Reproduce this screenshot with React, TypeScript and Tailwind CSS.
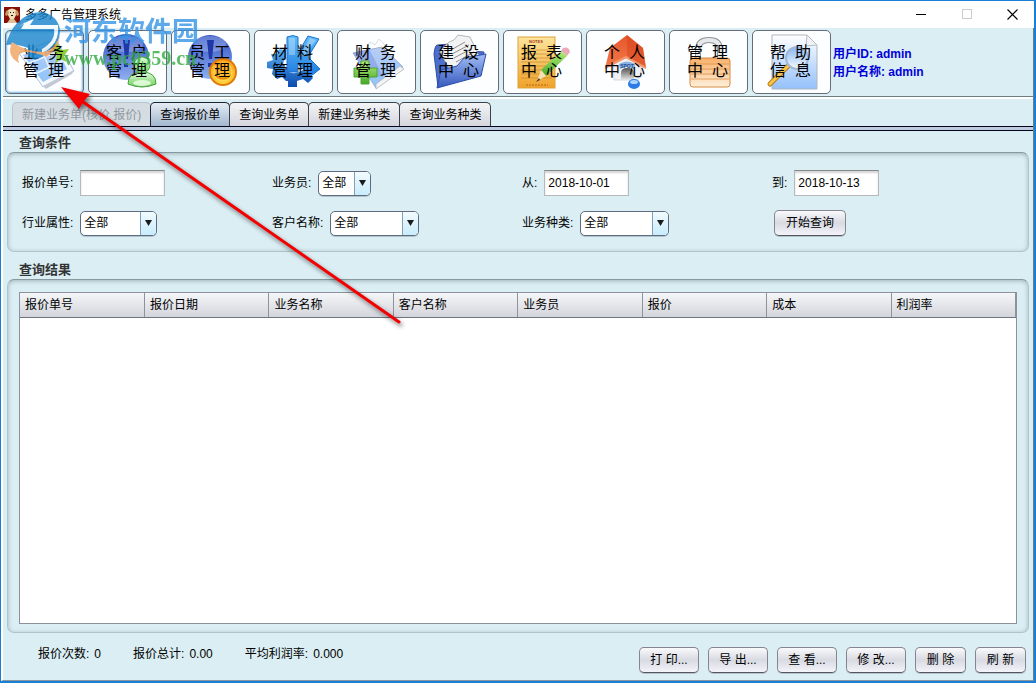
import type { ReactNode } from "react";
import clsx from "clsx";

/* ─── Data ─── */
const TABS = [
    { label: "新建业务单(核价 报价)", disabled: true },
    { label: "查询报价单", active: true },
    { label: "查询业务单" },
    { label: "新建业务种类" },
    { label: "查询业务种类" },
];

const COLUMNS = ["报价单号", "报价日期", "业务名称", "客户名称", "业务员", "报价", "成本", "利润率"];

const TOTALS = [
    { label: "报价次数", value: "0" },
    { label: "报价总计", value: "0.00" },
    { label: "平均利润率", value: "0.000" },
];

const ACTIONS = ["打 印...", "导 出...", "查 看...", "修 改...", "删 除", "刷 新"];

/* ─── Toolbar drawings, all on a 79x64 canvas ─── */
const PhotoIcon = (
    <>
        <path d="M13 22 L50 8 L68 40 L37 56 Z" fill="#f4f8ff" stroke="#b4c2da" />
        <path d="M17 24 L48 12 L61 38 L37 51 Z" fill="url(#photo)" />
        <path d="M21 33 L53 20 M29 43 L58 29 M35 17 L47 46" stroke="#e8f3ff" strokeWidth="1.5" />
        <path d="M46 14 Q52 8 55 19 L63 18 L58 25 L61 31 L54 28 L49 33 L51 24 Z" fill="#8ccc36" />
        <path d="M37 55 L68 39 L66 43 L40 58 Z" fill="#c3c9d4" />
    </>
);

const ClientIcon = (
    <>
        <circle cx="37" cy="26" r="23" fill="url(#ball)" />
        <ellipse cx="37" cy="13" rx="17" ry="8" fill="#fff" opacity=".25" />
        <path d="M34 9 H41 L39 28 H36 Z M35 32 h4 v4 h-4 Z" fill="#2038a8" />
        <circle cx="53" cy="34" r="8" fill="url(#green)" stroke="#58a94e" />
        <path d="M39 53 Q39 41 53 41 Q67 41 67 53 Q53 59 39 53 Z" fill="url(#green)" stroke="#46a13c" />
        <ellipse cx="53" cy="52" rx="9" ry="3" fill="#efffe8" opacity=".8" />
    </>
);

const StaffIcon = (
    <>
        <circle cx="38" cy="26" r="22" fill="url(#ball)" />
        <ellipse cx="38" cy="13" rx="16" ry="8" fill="#fff" opacity=".25" />
        <path d="M35 9 H42 L40 28 H37 Z M36 32 h4 v4 h-4 Z" fill="#2038a8" />
        <circle cx="51" cy="41" r="13" fill="url(#coin)" stroke="#e07a08" strokeWidth="2" />
        <path d="M43 44 Q51 51 59 44" fill="none" stroke="#e58a0c" strokeWidth="2" />
        <circle cx="51" cy="41" r="9" fill="none" stroke="#ffdc58" />
    </>
);

const MaterialIcon = (
    <>
        <path d="M31 19 L24 18 L22 23 L16 23 L18 29 L12 31 V37 L18 38 L17 43 L22 48 L27 46 L31 50 L33 50 V56 H42 V50 L48 48 L53 52 L58 47 L54 42 L48 39 Q38 46 30 38 Q26 32 31 27 Z" fill="url(#gear)" />
        <path d="M32 6 Q38 3 43 6 V22 L53 5 L64 8 L53 26 L65 38 L56 45 L43 33 V41 H32 Z" fill="url(#kblue)" stroke="#1c72d0" />
        <path d="M34 7 h6 v17 h-6 Z M55 7 L61 9 L50 24 L45 25 Z" fill="#fff" opacity=".3" />
    </>
);

const FinanceIcon = (
    <>
        <path d="M28 18 L32 11 L37 14 L41 8 L46 13 L51 22 Z" fill="#fff" stroke="#d5dae4" />
        <path d="M15 22 L44 16 L65 36 L38 57 Z" fill="url(#photo)" stroke="#a0add0" />
        <path d="M15 22 L31 18 L45 45 L33 47 Z" fill="#8b9fe6" opacity=".7" />
        <path d="M38 53 L62 35 L66 38 L38 58 Z" fill="#f2f3f5" stroke="#a9acb4" strokeWidth=".7" />
        <path d="M23 30 H31 V37 H39 V46 H31 V53 H23 V46 H16 V37 H23 Z" fill="url(#plus)" stroke="#4fa632" />
    </>
);

const BuildIcon = (
    <>
        <path d="M13 23 Q14 13 17 14 L29 13 L31 19 L63 21 L60 44 L17 56 Z" fill="#4a6fd0" stroke="#2f4d9c" />
        <path d="M19 20 L28 11 L33 9 L37 4 L49 6 L58 25 L29 40 Z" fill="#f2f2f2" stroke="#b5b5b5" />
        <path d="M30 19 L44 11 M31 23 L48 14 M33 27 L50 18 M35 31 L53 21" stroke="#8f8f8f" strokeWidth="1" />
        <path d="M20 39 L36 35 L43 27 L65 23 L60 45 L16 57 Z" fill="url(#folder)" stroke="#2e4fa8" />
    </>
);

const ReportIcon = (
    <>
        <rect x="14" y="6" width="37" height="51" fill="url(#note)" stroke="#e0a13a" />
        <path d="M17 19 H48 M17 23 H48 M17 27 H48 M17 31 H48 M17 35 H48 M17 39 H48 M17 43 H48 M17 47 H48" stroke="#c98a28" strokeWidth=".7" />
        <text x="32" y="12" textAnchor="middle" fontSize="4" fontWeight="700" fill="#a23a1a">NOTES</text>
        <path d="M22 54 H44" stroke="#b5651c" strokeDasharray="2 1" />
        <path d="M59 17 Q65 15 66 21 L63 25 L57 20 Z" fill="#e9a9b6" />
        <path d="M57 20 L63 25 L42 45 L37 39 Z" fill="url(#plus)" />
        <path d="M37 39 L42 45 L33 50 Z" fill="#f3e3b4" />
        <path d="M35 47 L36 49 L32 51 Z" fill="#333" />
    </>
);

const HomeIcon = (
    <>
        <path d="M26 31 L39 25 L54 31 V46 L50 49 H27 Z" fill="#eef0f3" stroke="#c0c4ca" strokeWidth=".6" />
        <path d="M34 49 V42 Q34 37 40 37 Q47 37 47 42 V49 Z" fill="url(#door)" />
        <path d="M40 4 L23 17 L18 37 L39 27 L59 37 L56 17 Z" fill="url(#roof)" />
        <path d="M40 4 V27 L59 37 L56 17 Z" fill="#d5431c" opacity=".5" />
        <path d="M18 37 L39 26 L59 37" fill="none" stroke="#f49468" strokeWidth="2" />
        <path d="M32 33 Q40 28 48 33 L47 38 Q40 34 33 38 Z" fill="#8cb1e4" />
        <text x="40" y="37" textAnchor="middle" fontSize="5" fontWeight="700" fill="#264d92">SPOT</text>
        <ellipse cx="47" cy="53" rx="6" ry="5" fill="#2b7be6" />
        <ellipse cx="47" cy="51" rx="4" ry="2" fill="#a6d4ff" />
    </>
);

const LockIcon = (
    <>
        <path d="M28 29 V19 Q28 9 39 9 Q50 9 50 19 V29" fill="none" stroke="#8f9396" strokeWidth="6" />
        <path d="M28 29 V19 Q28 9 39 9 Q50 9 50 19 V29" fill="none" stroke="#e6e8e9" strokeWidth="4" />
        <rect x="20" y="27" width="40" height="29" rx="3" fill="url(#brass)" stroke="#d98a3e" />
        <path d="M21 33 H59 M21 38 H59 M21 43 H59 M21 48 H59" stroke="#d5853a" strokeWidth="1" opacity=".7" />
    </>
);

const HelpIcon = (
    <>
        <path d="M19 4 H54 L64 14 V58 H19 Z" fill="url(#sheet)" stroke="#aeb6bd" />
        <path d="M54 4 L53 15 L64 14 Z" fill="#eef2f5" stroke="#b6bec5" />
        <path d="M35 35 L17 53" stroke="#b97a12" strokeWidth="5" strokeLinecap="round" />
        <path d="M35 35 L17 53" stroke="#f9c64c" strokeWidth="3" strokeLinecap="round" />
        <circle cx="44" cy="27" r="11" fill="url(#lens)" stroke="#9eb8d8" strokeWidth="2" />
    </>
);

const MODULES: { top: string; bottom: string; icon: ReactNode }[] = [
    { top: "业  务", bottom: "管  理", icon: PhotoIcon },
    { top: "客  户", bottom: "管  理", icon: ClientIcon },
    { top: "员  工", bottom: "管  理", icon: StaffIcon },
    { top: "材  料", bottom: "管  理", icon: MaterialIcon },
    { top: "财  务", bottom: "管  理", icon: FinanceIcon },
    { top: "建  设", bottom: "中  心", icon: BuildIcon },
    { top: "报  表", bottom: "中  心", icon: ReportIcon },
    { top: "个  人", bottom: "中  心", icon: HomeIcon },
    { top: "管  理", bottom: "中  心", icon: LockIcon },
    { top: "帮  助", bottom: "信  息", icon: HelpIcon },
];

/* Gradients shared by the toolbar drawings */
const GRADIENTS = [
    { id: "photo", stops: ["#b9cdf6", "#8fc4f8"] },
    { id: "ball", stops: ["#2f50c4", "#8fb0ee"] },
    { id: "green", stops: ["#e4fadc", "#6cd05c"] },
    { id: "coin", stops: ["#ffa21c", "#ffd23c"] },
    { id: "gear", stops: ["#5ab0f4", "#0a4bb0"] },
    { id: "kblue", stops: ["#62bcfa", "#1f7be0"] },
    { id: "plus", stops: ["#b6ec78", "#45a828"] },
    { id: "folder", stops: ["#a3bdf4", "#3459bf"] },
    { id: "note", stops: ["#fde49c", "#f0a22a"] },
    { id: "roof", stops: ["#e8552c", "#f07a48"] },
    { id: "door", stops: ["#555555", "#e6e6e6"] },
    { id: "brass", stops: ["#f9b068", "#fff0dc"] },
    { id: "sheet", stops: ["#ffffff", "#94c0fb"] },
    { id: "lens", stops: ["#8ab6f0", "#f4faff"] },
];

/* ─── Small controls ─── */
function PushButton({ children, className }: { children: ReactNode; className?: string }) {
    return (
        <button
            type="button"
            className={clsx(
                "h-[26px] rounded-[5px] border border-[#85858f] border-b-[#55555f] bg-linear-to-b from-[#fafafc] via-[#d8dae2] to-[#f4f4fa] text-center shadow-[0_1px_0_#b4c4c9]",
                className,
            )}
        >
            {children}
        </button>
    );
}

function TextField({ id, label, value }: { id: string; label: string; value?: string }) {
    return (
        <div className="flex items-center gap-[7px]">
            <label htmlFor={id}>{label}:</label>
            <input
                id={id}
                type="text"
                defaultValue={value}
                className="h-[26px] w-[85px] border border-[#b4b9bb] border-t-[#85898b] bg-white px-[3px] shadow-[inset_0_2px_2px_#d5d5d5] outline-none"
            />
        </div>
    );
}

function SelectField({ id, label, width }: { id: string; label: string; width: string }) {
    return (
        <div className="flex items-center gap-[7px]">
            <label htmlFor={id}>{label}:</label>
            <div className={clsx("relative h-[25px]", width)}>
                <select
                    id={id}
                    className="h-full w-full appearance-none rounded-[5px] border border-[#5f6b80] bg-white pl-[3px] shadow-[0_1px_0_#b0c4cc] outline-none"
                >
                    <option>全部</option>
                </select>
                <span className="pointer-events-none absolute inset-y-px right-px flex w-[16px] items-center justify-center rounded-r-[4px] border-l border-[#7fa0b8] bg-linear-to-b from-[#f2fbff] to-[#c8ecfc]">
                    <svg width="7" height="6" viewBox="0 0 7 6">
                        <path d="M0 0 H7 L3.5 6 Z" fill="#1c1c1c" />
                    </svg>
                </span>
            </div>
        </div>
    );
}

const PANEL = "rounded-[7px] border border-[#b0c4c9] border-t-[#87999e] shadow-[inset_0_1px_4px_#9fb3b8]";

export default function App() {
    return (
        <div className="relative flex min-h-screen flex-col border border-r-2 border-b-2 border-[#1a7fd4] bg-[#daeef3] font-['Liberation_Sans','Noto_Sans_CJK_SC',sans-serif] text-[12px] leading-[18px] text-black">
            <svg className="absolute size-0" aria-hidden="true">
                <defs>
                    {GRADIENTS.map(({ id, stops }) => (
                        <linearGradient key={id} id={id} x1="0" y1="0" x2="0" y2="1">
                            <stop offset="0" stopColor={stops[0]} />
                            <stop offset="1" stopColor={stops[1]} />
                        </linearGradient>
                    ))}
                </defs>
            </svg>

            {/* ── Title bar ── */}
            <header className="flex h-[27px] items-center bg-white pl-[3px]">
                <svg width="16" height="16" viewBox="0 0 16 16">
                    <rect width="16" height="16" fill="#861008" />
                    <path d="M4 3 Q8 0 12 3 L12 8 L10 12 H6 L4 8 Z" fill="#f2e0bc" />
                    <path d="M4 3 L2 4 L1 8 L3 9 L5 6 Z M12 3 L14 4 L15 8 L13 9 L11 6 Z" fill="#c89a66" />
                    <path d="M6 5 h1 v1 h-1 Z M9 5 h1 v1 h-1 Z M7 8 h2 v1 h-2 Z" fill="#2b1208" />
                    <path d="M6 12 H10 L13 16 H3 Z" fill="#dcc096" />
                </svg>
                <h1 className="ml-[5px] flex-1">多多广告管理系统</h1>
                <button type="button" aria-label="最小化" className="flex h-full w-[46px] items-center justify-center">
                    <svg width="11" height="11" viewBox="0 0 11 11"><path d="M0 5.5 H10" stroke="#000" /></svg>
                </button>
                <button type="button" aria-label="最大化" className="flex h-full w-[46px] items-center justify-center">
                    <svg width="11" height="11" viewBox="0 0 11 11"><rect x=".5" y=".5" width="9" height="9" fill="none" stroke="#ccc" /></svg>
                </button>
                <button type="button" aria-label="关闭" className="flex h-full w-[44px] items-center justify-center">
                    <svg width="11" height="11" viewBox="0 0 11 11"><path d="M.5 .5 L10.5 10.5 M10.5 .5 L.5 10.5" stroke="#000" strokeWidth="1.1" /></svg>
                </button>
            </header>

            <div className="flex flex-1 flex-col border-r border-b border-l-2 border-r-[#6d7d80] border-b-[#8a989b] border-l-white">
                {/* ── Module toolbar ── */}
                <nav className="flex items-center gap-1 border-b border-[#6d7d80] pt-[2px] pb-[2px] pl-[2px]">
                    {MODULES.map(({ top, bottom, icon }, i) => (
                        <button
                            key={i}
                            type="button"
                            className={clsx(
                                "grid h-[64px] w-[79px] shrink-0 place-items-center overflow-hidden rounded-[5px] border border-[#666c78] bg-[#fdfeff] text-[16px] leading-[18px]",
                                i === 0 && "shadow-[inset_0_0_2px_1px_#78b4e0]",
                            )}
                        >
                            <svg className="col-start-1 row-start-1" width="79" height="64" viewBox="0 0 79 64">{icon}</svg>
                            <span className="col-start-1 row-start-1 pr-[4px] pb-[3px] whitespace-pre">
                                {top}
                                <br />
                                {bottom}
                            </span>
                        </button>
                    ))}
                    <div className="-ml-[2px] pt-[2px] font-bold text-[#0000d8]">
                        <p>用户ID: admin</p>
                        <p>用户名称: admin</p>
                    </div>
                </nav>

                {/* ── Tabs ── */}
                <div className="flex border-t-2 border-white pt-[3px] pl-[9px]" role="tablist">
                    {TABS.map(({ label, disabled, active }) => (
                        <button
                            key={label}
                            type="button"
                            role="tab"
                            aria-selected={!!active}
                            disabled={disabled}
                            className={clsx(
                                "-mr-px h-[24px] rounded-t-[5px] border border-b-0 px-[9px]",
                                disabled && "border-[#b9c3c9] bg-[#d5dde2] text-[#9097a0]",
                                active && "border-[#1c2430] bg-linear-to-b from-[#e4ecf4] to-[#a3b7cf]",
                                !disabled && !active && "border-[#3c4048] bg-linear-to-b from-[#f3f4f6] to-[#d5d6dd]",
                            )}
                        >
                            {label}
                        </button>
                    ))}
                </div>
                <div className="h-[5px] border-y border-[#05051c] bg-[#bccbe0]" />

                <main className="flex flex-1 flex-col px-[4px]">
                    {/* ── 查询条件 ── */}
                    <h2 className="mt-[3px] pl-[12px] text-[13px] leading-[18px] font-bold text-[#333]">查询条件</h2>
                    <form className={clsx("grid grid-cols-4 gap-y-[14px] pt-[17px] pr-[6px] pb-[15px] pl-[14px]", PANEL)}>
                        <TextField id="quoteNo" label="报价单号" />
                        <SelectField id="salesman" label="业务员" width="w-[53px]" />
                        <TextField id="from" label="从" value="2018-10-01" />
                        <TextField id="to" label="到" value="2018-10-13" />
                        <SelectField id="industry" label="行业属性" width="w-[77px]" />
                        <SelectField id="customer" label="客户名称" width="w-[89px]" />
                        <SelectField id="kind" label="业务种类" width="w-[89px]" />
                        <PushButton className="ml-[2px] w-[72px]">开始查询</PushButton>
                    </form>

                    {/* ── 查询结果 ── */}
                    <h2 className="mt-[9px] pl-[12px] text-[13px] leading-[18px] font-bold text-[#333]">查询结果</h2>
                    <section className={clsx("flex flex-1 flex-col px-[11px] pt-[12px] pb-[8px]", PANEL)}>
                        <div className="flex-1 border border-[#8b929c] bg-white">
                            <table className="w-full table-fixed border-collapse">
                                <thead>
                                    <tr>
                                        {COLUMNS.map(c => (
                                            <th
                                                key={c}
                                                className="h-[24px] border-r border-b border-r-[#8d929b] border-b-[#6f747e] bg-linear-to-b from-[#f5f6f8] to-[#d3d5dc] px-[5px] text-left font-normal"
                                            >
                                                {c}
                                            </th>
                                        ))}
                                    </tr>
                                </thead>
                            </table>
                        </div>
                    </section>
                </main>

                {/* ── Totals and actions ── */}
                <footer className="flex h-[47px] items-center justify-between pr-[7px] pl-[35px]">
                    <dl className="flex gap-8 pb-[6px]">
                        {TOTALS.map(({ label, value }) => (
                            <div key={label} className="flex gap-[5px]">
                                <dt>{label}:</dt>
                                <dd>{value}</dd>
                            </div>
                        ))}
                    </dl>
                    <div className="flex gap-[9px] pt-[6px]">
                        {ACTIONS.map(a => (
                            <PushButton key={a} className={a.endsWith("...") ? "w-[60px]" : "w-[51px]"}>{a}</PushButton>
                        ))}
                    </div>
                </footer>
            </div>

            {/* ── Site mark ── */}
            <div className="pointer-events-none absolute top-[9px] left-[3px] flex opacity-80">
                <svg width="60" height="60" viewBox="0 0 60 60">
                    <path d="M2 35 Q5 22 13 13 Q25 1 39 2 Q54 6 56 20 Q56 38 38 47 L31 50 V22 H24 V38 Q12 33 2 35 Z" fill="#1683cc" />
                    <path d="M6 30 Q10 20 21 12 L17 19 H50 Q52 31 38 39 V43 Q56 35 54 15 H26 L30 9 Q13 14 6 30 Z" fill="#f4fbff" />
                    <path d="M24 22 H31 V50 L24 46 Z M38 22 H45 Q45 28 38 32 Z" fill="#1683cc" />
                    <path d="M8 32 Q2 46 15 53 Q12 43 20 42 Q32 42 42 47 Q54 40 56 26 Q50 40 40 42 Q22 42 8 32 Z" fill="#f0a25c" />
                </svg>
                <div className="pt-[7px]">
                    <p className="text-[27px] leading-[30px] font-bold text-[#3794e4]">河东软件园</p>
                    <p className="font-['Liberation_Serif',serif] text-[20px] leading-[22px] font-bold text-[#36ab42]">www.pc0359.cn</p>
                </div>
            </div>

            {/* ── Pointer ── */}
            <svg className="pointer-events-none absolute top-[79px] left-[54px] drop-shadow-[2px_3px_2px_#00000080]" width="352" height="250" viewBox="55 80 352 250">
                <path d="M76 97 L399 322" stroke="#f40000" strokeWidth="3" strokeLinecap="round" />
                <path d="M61 87 L90 94 L84 101 L79 109 Z" fill="#f40000" />
            </svg>
        </div>
    );
}
